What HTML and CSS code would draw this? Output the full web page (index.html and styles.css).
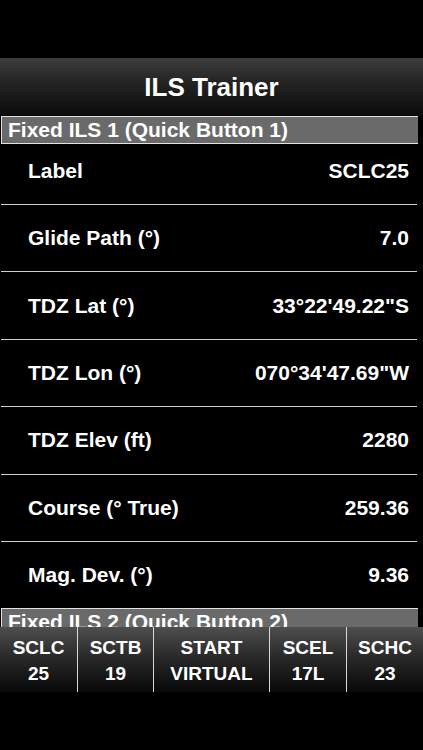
FILE: index.html
```html
<!DOCTYPE html>
<html>
<head>
<meta charset="utf-8">
<link rel="stylesheet" href="styles.css">
</head>
<body>
<div class="screen">
  <div class="status"></div>
  <header class="navbar"><h1 class="title">ILS Trainer</h1></header>
  <main class="list">
    <div class="section-header">Fixed ILS 1 (Quick Button 1)</div>
    <div class="row first"><span class="label">Label</span><span class="value">SCLC25</span></div>
    <div class="row"><span class="label">Glide Path (°)</span><span class="value">7.0</span></div>
    <div class="row"><span class="label">TDZ Lat (°)</span><span class="value">33°22'49.22"S</span></div>
    <div class="row"><span class="label">TDZ Lon (°)</span><span class="value">070°34'47.69"W</span></div>
    <div class="row"><span class="label">TDZ Elev (ft)</span><span class="value">2280</span></div>
    <div class="row"><span class="label">Course (° True)</span><span class="value">259.36</span></div>
    <div class="row last"><span class="label">Mag. Dev. (°)</span><span class="value">9.36</span></div>
    <div class="section-header">Fixed ILS 2 (Quick Button 2)</div>
  </main>
  <nav class="toolbar">
    <button class="tb-btn"><span>SCLC</span><span>25</span></button>
    <button class="tb-btn"><span>SCTB</span><span>19</span></button>
    <button class="tb-btn"><span>START</span><span>VIRTUAL</span></button>
    <button class="tb-btn"><span>SCEL</span><span>17L</span></button>
    <button class="tb-btn"><span>SCHC</span><span>23</span></button>
  </nav>
</div>
</body>
</html>
```
FILE: styles.css
```css
* { box-sizing: border-box; }
html, body {
  margin: 0;
  padding: 0;
  background: #000;
}
body {
  font-family: "Liberation Sans", Arial, Helvetica, sans-serif;
  color: #fff;
  width: 423px;
  height: 750px;
  overflow: hidden;
}
.screen {
  display: flex;
  flex-direction: column;
  width: 423px;
  height: 750px;
}
.status { height: 58px; flex: none; }
.navbar {
  height: 58px;
  flex: none;
  display: flex;
  align-items: center;
  justify-content: center;
  background: linear-gradient(to bottom, #3d3d3d 0%, #222 45%, #0b0b0b 100%);
}
.title {
  margin: 0;
  font-size: 26px;
  font-weight: bold;
  line-height: 1;
}
.list {
  height: 511px;
  flex: none;
  overflow: hidden;
}
.section-header {
  height: 28px;
  margin: 0 5px 0 1px;
  padding-left: 6px;
  background: #6a6a6a;
  border-top: 1px solid #e2e2e2;
  border-left: 1px solid #e2e2e2;
  border-bottom: 1px solid #e2e2e2;
  font-size: 21px;
  font-weight: bold;
  line-height: 26px;
  white-space: nowrap;
  overflow: hidden;
}
.row {
  height: 67.4px;
  margin: 0 6px 0 1px;
  padding: 0 8px 0 27px;
  display: flex;
  align-items: center;
  justify-content: space-between;
  border-bottom: 1px solid #cfcfcf;
  font-size: 21px;
  font-weight: bold;
}
.row.first {
  height: 61px;
  padding-bottom: 7px;
}
.row.last {
  height: 66px;
  border-bottom: none;
}
.toolbar {
  height: 65px;
  flex: none;
  display: grid;
  grid-template-columns: 77px 76px 116px 77px 77px;
  background: linear-gradient(to bottom, #4e4e4e 0%, #2a2a2a 45%, #080808 100%);
}
.tb-btn {
  appearance: none;
  background: transparent;
  border: none;
  margin: 0;
  padding: 3px 0 0 0;
  display: flex;
  flex-direction: column;
  align-items: center;
  justify-content: center;
  color: #fff;
  font-family: "Liberation Sans", Arial, Helvetica, sans-serif;
  font-size: 19px;
  font-weight: bold;
  line-height: 26px;
}
.tb-btn + .tb-btn {
  border-left: 1px solid #d8d8d8;
}
```
